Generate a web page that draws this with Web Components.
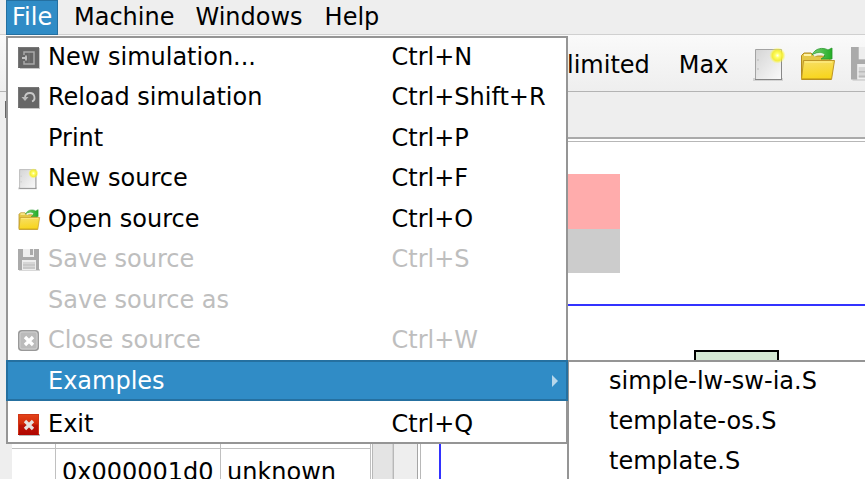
<!DOCTYPE html>
<html lang="en"><head><meta charset="utf-8"><title>Simulator</title>
<style>html,body{margin:0;height:100%;overflow:hidden}body{font:24px/28px "DejaVu Sans",sans-serif;color:#000;background:#eee}</style></head>
<body><sim-window></sim-window>
<script>
const icons={
newsim:`<path d="M20 1h2v21H2v-2h18z" fill="#c8c8c8"/><path d="M0 0h21v21H0z" fill="#666"/><path d="M.5 20.500V.5h20" fill="none" stroke="#777"/><path d="M6 8V5h10v12H6v-3" fill="none" stroke="#a9a9a9" stroke-width="1.500"/><path d="M4 11h5M8 8.500v5" fill="none" stroke="#c0c0c0" stroke-width="1.800"/><path d="M11 6v10" stroke="#777"/>`,
reload:`<path d="M20 1h2v21H2v-2h18z" fill="#c8c8c8"/><path d="M0 0h21v21H0z" fill="#666"/><path d="M.5 20.500V.5h20" fill="none" stroke="#777"/><path d="M7 11c0-3 2-5 5-5 5 0 6 7 2 8.500" fill="none" stroke="#c8c8c8" stroke-width="1.800"/><path d="M3.500 10h7L7 14z" fill="#bbb"/>`,
paper:`<defs><linearGradient id="p" x2="1" y2="1"><stop stop-color="#d5d5d5"/><stop offset="1" stop-color="#fafafa"/></linearGradient><radialGradient id="s"><stop stop-color="#fffff0"/><stop offset=".28" stop-color="#ffff65"/><stop offset=".65" stop-color="#f6ed20" stop-opacity=".85"/><stop offset="1" stop-color="#ffff50" stop-opacity="0"/></radialGradient></defs><path d="M0 31h30v3H0z" fill="#bbb" opacity=".55"/><path d="M2.500 2.500h26v30h-26z" fill="url(#p)" stroke="#a3a3a3"/><path d="M2 32.500h27" stroke="#858585"/><path d="M28.500 9v24" stroke="#888"/><path d="M4 13h2M4 22h2" stroke="#bbb"/><circle cx="24.500" cy="8.500" r="8.200" fill="url(#s)"/>`,
folder:`<defs><linearGradient id="f" x2=".2" y2="1"><stop stop-color="#f7df68"/><stop offset="1" stop-color="#f8d51d"/></linearGradient><linearGradient id="g" x2="1"><stop stop-color="#78cf75"/><stop offset="1" stop-color="#24ad25"/></linearGradient></defs><path d="M1.500 31V8.500L4 6h7l3 3h16v5" fill="#e4c747" stroke="#b18a20"/><path d="M4 8h7" stroke="#fff2a5" stroke-width="2"/><path d="M12 8c3-7 11-8 16-5l4-2v11H21l4-3c-4-4-9-4-13-1z" fill="url(#g)" stroke="#27982c" stroke-width=".8"/><path d="M14 9c4-3 7-3 10-1" fill="none" stroke="#e8f4df" stroke-width="2"/><path d="M3.500 13.500h31l-3 19h-30z" fill="url(#f)" stroke="#bd9527"/><path d="M5 15h27" stroke="#ffef91"/><path d="M2 32h29" stroke="#b48b1b"/>`,
save:`<path d="M1 20h21v2H1z" fill="#d8d8d8"/><path d="M0 0h21v21H0z" fill="#aaa"/><path d="M5 0h11v8H5z" fill="#eee"/><path d="M12 0h3v6h-3z" fill="#aaa"/><path d="M4 11h14v10H4z" fill="#eee"/><path d="M5 13h12v7H5z" fill="#d6d6d6"/><path d="M5 16h12M5 19h12" stroke="#bbb"/>`,
close:`<rect x=".75" y=".75" width="19.500" height="19.500" rx="3" fill="#bbb" stroke="#999" stroke-width="1.500"/><rect x="2" y="2" width="17" height="17" rx="2" fill="none" stroke="#d0d0d0"/><path d="m7 7 8 8m0-8-8 8" stroke="#fff" stroke-width="3.300"/>`,
exit:`<defs><linearGradient id="r" x2="0" y2="1"><stop stop-color="#e5451b"/><stop offset=".48" stop-color="#d22908"/><stop offset=".52" stop-color="#bd1507"/><stop offset="1" stop-color="#b00600"/></linearGradient></defs><path d="M1 20h21v2H1z" fill="#bbb"/><path d="M0 0h21v21H0z" fill="url(#r)"/><path d="M.5 20V.5h20V20" fill="none" stroke="#cf3516"/><path d="m7 7 8 8m0-8-8 8" stroke="#e6e2df" stroke-width="3.300"/>`};
const define=(n,render)=>customElements.define(n,class extends HTMLElement{connectedCallback(){if(!this.shadowRoot)this.attachShadow({mode:'open'}).innerHTML=render(this)}});
define('ui-icon',e=>{const n=e.getAttribute('name'),big=n=='paper'||n=='folder';return `<style>:host{display:block;width:22px;height:22px}svg{display:block;width:100%;height:100%;overflow:visible}</style><svg viewBox="${big?'0 0 35 35':'0 0 22 22'}">${icons[n]||''}</svg>`});
define('menu-bar',()=>`<style>:host{display:flex;height:35px;background:#eee;box-shadow:inset 0 -1px #d0d0d0;padding-left:6px}</style><slot></slot>`);
define('menu-title',()=>`<style>:host{display:block;box-sizing:border-box;height:35px;padding:3px 8px 0 9px}:host([active]){width:52px;padding:3px 0 0 6px;margin-right:7px;color:#fff;background:#308cc6;box-shadow:inset 0 0 0 1px #2570a0}</style><slot></slot>`);
define('tool-bar',()=>`<style>:host{display:flex;align-items:center;box-sizing:border-box;height:57px;padding-left:567px;background:linear-gradient(#fafafa,#eee);border-bottom:1px solid #b3b3b3}.max{margin-left:29px}.paper{width:35px;height:35px;margin-left:25px}.folder{width:35px;height:35px;margin-left:12px}.save{width:34px;height:34px;margin-left:16px}ui-icon{flex:none;margin-top:2px}span{margin-top:4px}</style><span>limited</span><span class="max">Max</span><ui-icon class="paper" name="paper"></ui-icon><ui-icon class="folder" name="folder"></ui-icon><ui-icon class="save" name="save"></ui-icon>`);
define('menu-item',e=>`<style>:host{display:grid;grid-template-columns:30px 343.500px 1fr;align-items:center;box-sizing:border-box;height:40.500px;padding-left:12px;white-space:pre}:host([disabled]){color:#bebebe}:host([active]){height:41px;margin-bottom:2px;color:#fff;background:#308cc6;box-shadow:inset 0 0 0 2px #2570a0;position:relative}:host([sub]){grid-template-columns:1fr;padding-left:42px;height:40.200px}ui-icon{margin-top:3px}.t{padding-top:1px}.arrow{justify-self:end;margin-right:10px;width:0;height:0;border:6px solid transparent;border-left-color:#b7d7eb;border-right:0}</style>${e.hasAttribute('sub')?'':`<ui-icon name="${e.getAttribute('icon')||''}"></ui-icon>`}<span class="t"><slot></slot></span>${e.hasAttribute('active')?'<i class="arrow"></i>':e.hasAttribute('key')?`<span class="t">${e.getAttribute('key')}</span>`:''}`);
define('menu-panel',()=>`<style>:host{display:block;background:#fff;position:absolute}:host::before{content:"";position:absolute;inset:0;border:2px solid #959595}</style><slot></slot>`);
define('register-table',()=>`<style>:host{display:grid;grid-template-columns:44px 165px 150px;grid-template-rows:1fr 31px;background:#fff;overflow:hidden;min-height:0}div{box-sizing:border-box;border-right:1px solid #c0c0c0;border-top:1px solid #c0c0c0;padding:9px 0 0 6px}.e{border-top:0}</style><div class="e"></div><div class="e"></div><div class="e"></div><div></div><div>0x000001d0</div><div>unknown</div>`);
define('core-diagram',()=>`<style>:host{display:block;position:relative;overflow:hidden;background:#fff}i{position:absolute}.p{left:100px;top:32px;width:98.700px;height:56px;background:#ffacac}.g{left:100px;top:87px;width:98.700px;height:44px;background:#ccc}.b{left:18px;top:162px;width:500px;height:300px;border:2px solid #3232ff}.n{left:273px;top:208px;width:81px;height:50px;border:2px solid #000;background:#d5e8d4}</style><i class="p"></i><i class="g"></i><i class="b"></i><i class="n"></i>`);
define('work-area',()=>`<style>:host{display:grid;grid-template-columns:12px 359px 50px 1fr;grid-template-rows:45px 342px;height:387px;background:#eee}header{grid-column:1/-1;display:flex;align-items:start;padding:9px 0 0 5px}header i{width:1px;height:17px;background:#666}.side{display:grid;grid-template-columns:1px 1px 19px 1px 1px 23px 1px 2px 1px;background:#fff}.side i:nth-child(2),.side i:nth-child(5),.side i:nth-child(9){background:#b8b8b8}.side i:nth-child(3){background:#e4e4e4}.side i:nth-child(4){background:#d2d2d2}.side i:nth-child(6){background:#eee}.side i:nth-child(7){background:#a5a5a5}main{display:grid;grid-template-rows:2px 2px 1px 1fr;min-height:0;background:#fff}main i:nth-child(1){background:#aaa}main i:nth-child(3){background:#b7b7b7}</style><header><i></i></header><div></div><register-table></register-table><div class="side"><i></i><i></i><i></i><i></i><i></i><i></i><i></i><i></i><i></i></div><main><i></i><i></i><i></i><core-diagram></core-diagram></main>`);
define('sim-window',()=>`<style>:host{display:block;position:relative;width:865px;height:479px;overflow:hidden}.main{left:6px;top:36px;width:562px;height:407.500px}.sub{left:567px;top:360px;width:400px;height:160px}</style><menu-bar><menu-title active>File</menu-title><menu-title>Machine</menu-title><menu-title style="padding-left:13px">Windows</menu-title><menu-title style="padding-left:14px">Help</menu-title></menu-bar><tool-bar></tool-bar><work-area></work-area><menu-panel class="sub"><menu-item sub>simple-lw-sw-ia.S</menu-item><menu-item sub>template-os.S</menu-item><menu-item sub>template.S</menu-item></menu-panel><menu-panel class="main"><menu-item icon="newsim" key="Ctrl+N">New simulation...</menu-item><menu-item icon="reload" key="Ctrl+Shift+R">Reload simulation</menu-item><menu-item key="Ctrl+P">Print</menu-item><menu-item icon="paper" key="Ctrl+F">New source</menu-item><menu-item icon="folder" key="Ctrl+O">Open source</menu-item><menu-item disabled icon="save" key="Ctrl+S">Save source</menu-item><menu-item disabled>Save source as</menu-item><menu-item disabled icon="close" key="Ctrl+W">Close source</menu-item><menu-item active>Examples</menu-item><menu-item icon="exit" key="Ctrl+Q">Exit</menu-item></menu-panel>`);
</script></body></html>
